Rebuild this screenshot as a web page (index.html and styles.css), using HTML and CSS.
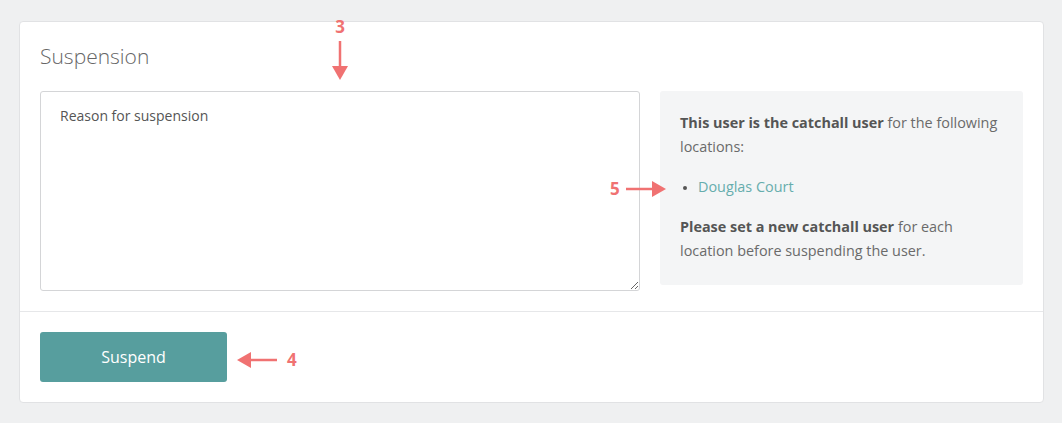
FILE: index.html
```html
<!DOCTYPE html>
<html>
<head>
<meta charset="utf-8">
<link rel="stylesheet" href="styles.css">
</head>
<body>
<div class="card">
  <div class="card-body">
    <h2 class="title">Suspension</h2>
    <div class="row">
      <textarea class="reason" placeholder="Reason for suspension"></textarea>
      <div class="info">
        <p><strong>This user is the catchall user</strong> for the following locations:</p>
        <ul>
          <li><a href="#">Douglas Court</a></li>
        </ul>
        <p><strong>Please set a new catchall user</strong> for each location before suspending the user.</p>
      </div>
    </div>
  </div>
  <div class="card-footer">
    <button class="btn">Suspend</button>
  </div>

  <div class="anno anno-3">
    <span class="num">3</span>
    <svg width="16" height="40" viewBox="0 0 16 40"><line x1="8" y1="0" x2="8" y2="26" stroke="#f07272" stroke-width="2.5"/><polygon points="0,25 16,25 8,39" fill="#f07272"/></svg>
  </div>
  <div class="anno anno-4">
    <svg width="41" height="16" viewBox="0 0 41 16"><polygon points="0,8 14,0 14,16" fill="#f07272"/><line x1="13" y1="8" x2="40" y2="8" stroke="#f07272" stroke-width="2.5"/></svg>
    <span class="num">4</span>
  </div>
  <div class="anno anno-5">
    <span class="num">5</span>
    <svg width="40" height="16" viewBox="0 0 40 16"><line x1="0" y1="8" x2="27" y2="8" stroke="#f07272" stroke-width="2.5"/><polygon points="40,8 26,0 26,16" fill="#f07272"/></svg>
  </div>
</div>
</body>
</html>
```
FILE: styles.css
```css
html, body {
  margin: 0;
  padding: 0;
}
body {
  background: #eff0f1;
  font-family: "Open Sans", "Noto Sans", sans-serif;
  color: #666;
  padding: 21px 18px 19px 19px;
}
.card {
  position: relative;
  background: #fff;
  border: 1px solid #e1e2e4;
  border-radius: 4px;
}
.card-body {
  padding: 19px 20px 20px 20px;
  border-bottom: 1px solid #e6e7e9;
}
.title {
  margin: 0 0 20px 0;
  font-size: 21px;
  font-weight: 300;
  line-height: 30px;
  color: #666;
}
.row {
  display: grid;
  grid-template-columns: 600px 1fr;
  gap: 20px;
  align-items: start;
}
.reason {
  box-sizing: border-box;
  width: 600px;
  height: 200px;
  margin: 0;
  border: 1px solid #d4d5d7;
  border-radius: 3px;
  padding: 14px 19px;
  font-family: inherit;
  font-size: 14px;
  line-height: 20px;
  color: #555;
  resize: vertical;
}
.reason::placeholder {
  color: #555;
  opacity: 1;
}
.info {
  background: #f4f5f6;
  border-radius: 3px;
  padding: 20px 20px 22px 20px;
  font-size: 14.4px;
  line-height: 24px;
  color: #6a6a6a;
}
.info p {
  margin: 0;
}
.info strong {
  font-weight: 700;
  color: #555;
}
.info ul {
  margin: 16px 0;
  padding-left: 18px;
}
.info li::marker {
  color: #555;
  font-size: 11px;
}
.info a {
  color: #66adad;
  text-decoration: none;
}
.card-footer {
  padding: 20px;
}
.btn {
  width: 187px;
  height: 50px;
  background: #579e9e;
  color: #fff;
  border: none;
  border-radius: 3px;
  font-family: inherit;
  font-size: 16px;
  cursor: pointer;
}
.anno {
  position: absolute;
  display: flex;
  align-items: center;
  color: #f07272;
  font-family: "Open Sans", "Noto Sans", sans-serif;
  font-weight: 700;
  font-size: 17px;
}
.anno svg {
  display: block;
}
.anno-3 {
  left: 312px;
  top: -7px;
  flex-direction: column;
  gap: 3px;
}
.anno-4 {
  left: 217px;
  top: 326px;
  gap: 9px;
}
.anno-5 {
  left: 590px;
  top: 155px;
  gap: 6px;
}
```
